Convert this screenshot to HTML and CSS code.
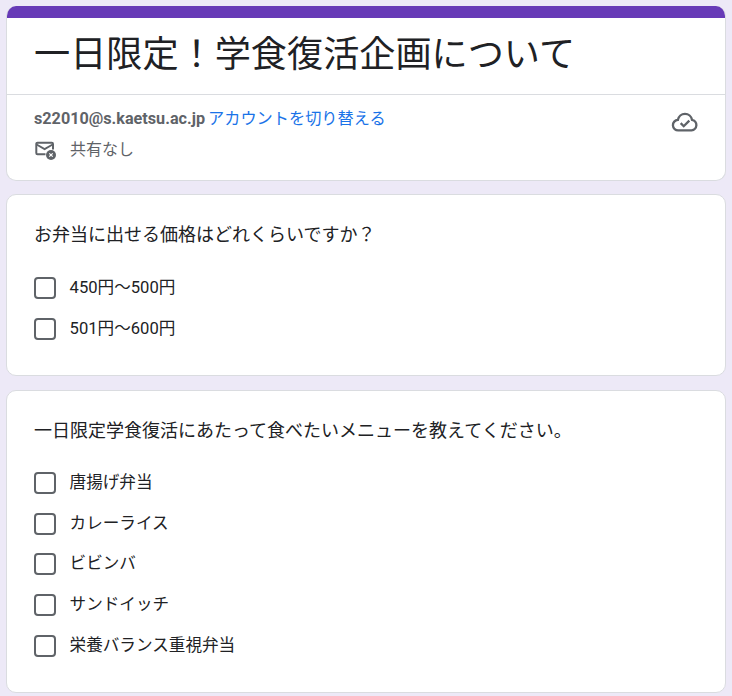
FILE: index.html
```html
<!DOCTYPE html>
<html lang="ja">
<head>
<meta charset="utf-8">
<title>一日限定&#xFF01;学食復活企画について</title>
<link rel="stylesheet" href="styles.css">
</head>
<body>
<main class="form">
  <section class="card header-card">
    <div class="accent"></div>
    <h1 class="title">一日限定&#xFF01;学食復活企画について</h1>
    <div class="account">
      <div class="account-info">
        <div class="account-line"><b class="email">s22010@s.kaetsu.ac.jp</b> <a class="switch">アカウントを切り替える</a></div>
        <div class="share-line">
          <svg class="mail-icon" width="22" height="22" viewBox="0 0 22 22" aria-hidden="true">
            <path d="M11.5 15.2H3.5A1.2 1.2 0 0 1 2.3 14V4.9A1.2 1.2 0 0 1 3.5 3.7h14.3A1.2 1.2 0 0 1 19 4.9V10.5" fill="none" stroke="#5f6368" stroke-width="2"/>
            <path d="M2.6 5.5l8 4.6 8-4.6" fill="none" stroke="#5f6368" stroke-width="1.8"/>
            <circle cx="17" cy="16" r="5" fill="#5f6368"/>
            <path d="M15.3 14.3l3.4 3.4M18.7 14.3l-3.4 3.4" stroke="#fff" stroke-width="1.2"/>
          </svg>
          <span class="share-text">共有なし</span>
        </div>
      </div>
      <svg class="cloud-icon" width="28" height="28" viewBox="0 0 24 24" aria-hidden="true">
        <path d="M6.4 19.2A4.5 4.5 0 0 1 5.9 10.2 6.3 6.3 0 0 1 12 5a6.1 6.1 0 0 1 6 5.1A4.6 4.6 0 0 1 17.6 19.2Z" fill="none" stroke="#5f6368" stroke-width="2"/>
        <path d="M8.3 13l2.6 2.6 4.8-4.8" fill="none" stroke="#5f6368" stroke-width="2"/>
      </svg>
    </div>
  </section>

  <section class="card question q-price">
    <p class="q-title">お弁当に出せる価格はどれくらいですか&#xFF1F;</p>
    <label class="option"><span class="box"></span><span class="opt-text">450円〜500円</span></label>
    <label class="option"><span class="box"></span><span class="opt-text">501円〜600円</span></label>
  </section>

  <section class="card question q-menu">
    <p class="q-title">一日限定学食復活にあたって食べたいメニューを教えてください。</p>
    <label class="option"><span class="box"></span><span class="opt-text">唐揚げ弁当</span></label>
    <label class="option"><span class="box"></span><span class="opt-text">カレーライス</span></label>
    <label class="option"><span class="box"></span><span class="opt-text">ビビンバ</span></label>
    <label class="option"><span class="box"></span><span class="opt-text">サンドイッチ</span></label>
    <label class="option"><span class="box"></span><span class="opt-text">栄養バランス重視弁当</span></label>
  </section>
</main>
</body>
</html>
```
FILE: styles.css
```css
* { box-sizing: border-box; }
html, body { height: 100%; }
body {
  margin: 0;
  background: #ede9f7;
  font-family: Roboto, "Noto Sans CJK JP", sans-serif;
  color: #202124;
  overflow: hidden;
}
.form {
  width: 720px;
  margin: 6px 0 0 6px;
  display: flex;
  flex-direction: column;
  gap: 13px;
}
.card {
  background: #fff;
  border: 1px solid #dadce0;
  border-radius: 10px;
}
.header-card {
  height: 175px;
  border-top: 0;
  overflow: hidden;
}
.accent { height: 12px; background: #673ab7; margin: 0 -1px; }
.title {
  margin: 0;
  height: 77px;
  padding: 13px 27px 0;
  font-size: 36.15px;
  line-height: 48px;
  font-weight: 400;
  border-bottom: 1px solid #dadce0;
  white-space: nowrap;
}
.account {
  display: flex;
  justify-content: space-between;
  padding: 12px 26px 0 27px;
}
.account-line { font-size: 16.2px; line-height: 24px; color: #5f6368; word-spacing: -1px; }
.email { font-weight: 700; }
.switch { color: #1a73e8; }
.share-line {
  display: flex;
  align-items: center;
  gap: 14px;
  margin-top: 5px;
  height: 24px;
}
.mail-icon { display: block; margin-top: 4px; }
.share-text { font-size: 16px; color: #5f6368; }
.cloud-icon { margin-top: 1px; display: block; }
.question { padding: 25px 27px 0; }
.q-price { height: 182px; margin-bottom: 1px; }
.q-menu { height: 303px; }
.q-title {
  margin: 0 0 18px;
  font-size: 18px;
  line-height: 30px;
  white-space: nowrap;
}
.q-menu .q-title { margin-bottom: 17px; }
.option {
  display: flex;
  align-items: center;
  gap: 13.6px;
  height: 40.6px;
}
.box {
  width: 22px;
  height: 22px;
  border: 2px solid #5f6368;
  border-radius: 4px;
  flex: none;
}
.opt-text { font-size: 16.6px; line-height: 24px; }
```
